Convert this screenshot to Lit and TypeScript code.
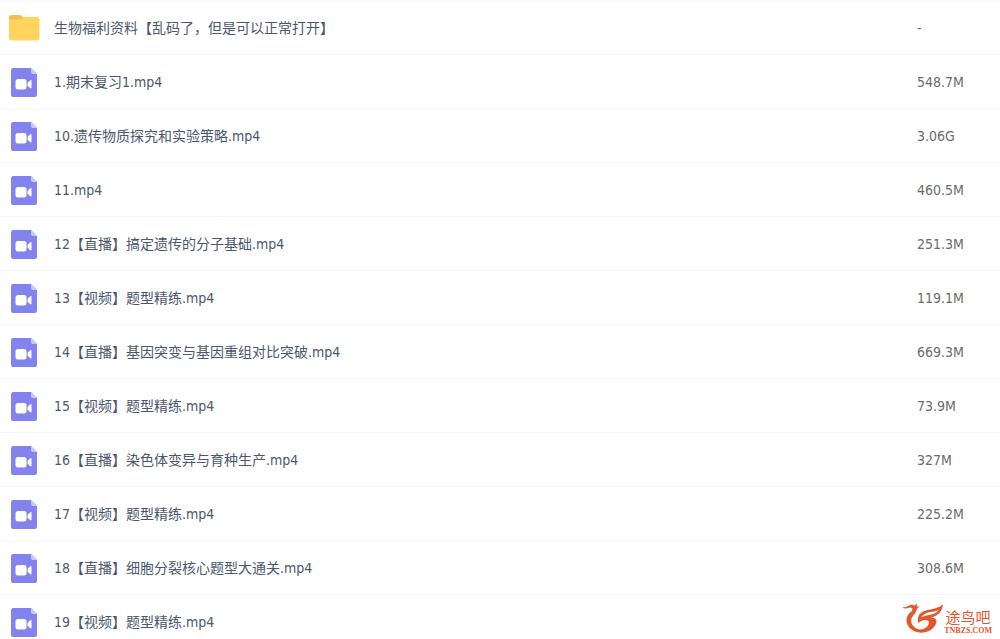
import { LitElement, html, css, svg } from "lit";
import { customElement, property } from "lit/decorators.js";

interface Entry {
  name: string;
  size: string;
  kind: "folder" | "video";
}

const video = (name: string, size = ""): Entry => ({ name, size, kind: "video" });

const entries: Entry[] = [
  { name: "生物福利资料【乱码了，但是可以正常打开】", size: "-", kind: "folder" },
  video("1.期末复习1.mp4", "548.7M"),
  video("10.遗传物质探究和实验策略.mp4", "3.06G"),
  video("11.mp4", "460.5M"),
  video("12【直播】搞定遗传的分子基础.mp4", "251.3M"),
  video("13【视频】题型精练.mp4", "119.1M"),
  video("14【直播】基因突变与基因重组对比突破.mp4", "669.3M"),
  video("15【视频】题型精练.mp4", "73.9M"),
  video("16【直播】染色体变异与育种生产.mp4", "327M"),
  video("17【视频】题型精练.mp4", "225.2M"),
  video("18【直播】细胞分裂核心题型大通关.mp4", "308.6M"),
  video("19【视频】题型精练.mp4"),
];

@customElement("file-icon")
class FileIcon extends LitElement {
  @property() kind: Entry["kind"] = "video";

  static styles = css`
    :host {
      display: block;
      width: 32px;
      height: 32px;
    }
    svg {
      display: block;
    }
  `;

  render() {
    const folder = svg`
      <path fill="#eebf55" d="M1 5.500Q1 3 3.500 3H12q1.500 0 2.500 1.500L16 7v5H1z"/>
      <path fill="#ffd45c" d="M1 8.500Q1 7.500 2.500 7.500H13L15.500 5H29.500q2 0 2 2V26q0 2.500-2.500 2.500H3.500Q1 28.500 1 26z"/>`;
    const clip = svg`
      <path fill="#8383f0" d="M5 2H23l6 6V28.500Q29 31 26.500 31H5Q3 31 3 28.500V4.500Q3 2 5 2z"/>
      <path fill="#c9c9fa" d="M23 2l6 6h-4q-2 0-2-2z"/>
      <rect fill="#fff" x="7.500" y="13" width="11" height="10.500" rx="2.500"/>
      <path fill="#fff" d="M19.500 17L22 14.500Q23.500 13.300 23.500 15V21.500Q23.500 23.200 22 22L19.500 19.500z"/>`;
    return html`<svg width="32" height="32" viewBox="0 0 32 32" aria-hidden="true">
      ${this.kind === "folder" ? folder : clip}
    </svg>`;
  }
}

@customElement("app-root")
class AppRoot extends LitElement {
  static styles = css`
    :host {
      display: block;
      position: relative;
      height: 100vh;
      overflow: hidden;
      background: #fff;
      color: #4c576e;
      font: 14px/20px "DejaVu Sans Condensed", "Noto Sans CJK SC", sans-serif;
    }
    .files {
      width: 100%;
      border-collapse: collapse;
      table-layout: fixed;
      border-top: 1px solid #f8f9fa;
    }
    .files tr {
      height: 54px;
    }
    .files td {
      padding: 0;
      border-bottom: 1px solid #f5f6f7;
      vertical-align: middle;
    }
    .entry {
      display: flex;
      align-items: center;
      gap: 14px;
      padding-left: 8px;
      white-space: nowrap;
    }
    .files .size {
      width: 83px;
      color: #6b6b6b;
    }
    .brand {
      position: absolute;
      right: 8px;
      bottom: 3px;
      display: flex;
      align-items: center;
      color: #e4572e;
    }
    .words {
      display: flex;
      flex-direction: column;
      align-items: center;
      padding-top: 4px;
    }
    .cn {
      font: 15px/20px "Noto Sans CJK SC", sans-serif;
    }
    .site {
      font: bold 8px/8px "Liberation Serif", serif;
    }
  `;

  render() {
    return html`
      <table class="files" lang="zh-CN">
        <tbody>
          ${entries.map(
            (e) => html`<tr>
              <td>
                <div class="entry"><file-icon .kind=${e.kind}></file-icon><span>${e.name}</span></div>
              </td>
              <td class="size">${e.size}</td>
            </tr>`
          )}
        </tbody>
      </table>
      <div class="brand" lang="zh-CN">
        <svg width="42" height="34" viewBox="0 0 42 34" aria-hidden="true">
          <path fill="#e4572e" d="M0 5.500Q4 5 6.500 4Q9 2 12.500 3.500L15.500 1.500L14.500 4.500L17.500 4.500Q15 6 14.500 8Q14 11 11.500 13Q7.500 18 10.500 23Q13 27 18 27.500Q23 27.500 26 23.500Q28.500 19 24.500 18Q20 17.500 16 21Q14.500 13 21 9.500Q25 7.500 31 7Q37 6 41 2.500Q40 10 35 13Q32 15 28.500 15.500Q35 15.500 34.500 20Q33 26 27 29Q20 32 13 29.500Q6 26.500 4.500 20Q4 14 8 10.500Q11 8.500 10.500 6.500Q9 5 6 6Q3 7 0 5.500z"/>
          <path fill="#fff" d="M19 15.500Q22 11 28 10Q34 9.500 37 7.500Q34 12 27 13Q22 13.500 19 15.500z"/>
        </svg>
        <div class="words"><span class="cn">途鸟吧</span><span class="site">TNBZS.COM</span></div>
      </div>
    `;
  }
}
